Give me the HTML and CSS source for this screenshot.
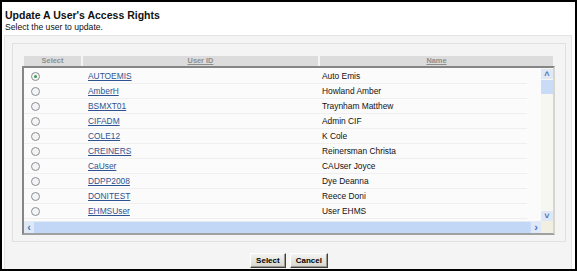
FILE: index.html
```html
<!DOCTYPE html>
<html lang="en">
<head>
  <meta charset="UTF-8">
  <title>Update A User's Access Rights</title>
  <link rel="stylesheet" href="styles.css">
</head>
<body>
<div class="page">
  <div class="head">
    <h1>Update A User's Access Rights</h1>
    <p>Select the user to update.</p>
  </div>
  <div class="panel">
    <div class="box">
      <div class="cols">
        <div class="plain">Select</div>
        <div>User ID</div>
        <div>Name</div>
      </div>
      <div class="list">
        <div class="rows">
          <div class="row"><span class="radio on"></span><a href="#">AUTOEMIS</a><span>Auto Emis</span></div>
          <div class="row"><span class="radio"></span><a href="#">AmberH</a><span>Howland Amber</span></div>
          <div class="row"><span class="radio"></span><a href="#">BSMXT01</a><span>Traynham Matthew</span></div>
          <div class="row"><span class="radio"></span><a href="#">CIFADM</a><span>Admin CIF</span></div>
          <div class="row"><span class="radio"></span><a href="#">COLE12</a><span>K Cole</span></div>
          <div class="row"><span class="radio"></span><a href="#">CREINERS</a><span>Reinersman Christa</span></div>
          <div class="row"><span class="radio"></span><a href="#">CaUser</a><span>CAUser Joyce</span></div>
          <div class="row"><span class="radio"></span><a href="#">DDPP2008</a><span>Dye Deanna</span></div>
          <div class="row"><span class="radio"></span><a href="#">DONITEST</a><span>Reece Doni</span></div>
          <div class="row"><span class="radio"></span><a href="#">EHMSUser</a><span>User EHMS</span></div>
        </div>
        <div class="vbar">
          <span class="arrow">&#x02C4;</span>
          <span class="vthumb"></span>
          <span class="track"></span>
          <span class="arrow">&#x02C5;</span>
        </div>
        <div class="hbar">
          <span class="arrow">&lsaquo;</span>
          <span class="hthumb"></span>
          <span class="arrow">&rsaquo;</span>
        </div>
        <div class="corner"></div>
      </div>
    </div>
    <div class="actions">
      <button>Select</button>
      <button>Cancel</button>
    </div>
  </div>
</div>
</body>
</html>
```

FILE: styles.css
```css
body { margin: 0; font-family: "Liberation Sans", Arial, sans-serif; background: #fff; }
.page { width: 577px; height: 271px; box-sizing: border-box; border: 2px solid #000; display: flex; flex-direction: column; }
.head { padding: 7px 0 0 3px; }
.head h1 { margin: 0; font-size: 10.5px; line-height: 13px; font-weight: bold; color: #111; }
.head p { margin: 0; font-size: 8.6px; line-height: 10px; color: #111; }
.panel { flex: 1; margin: 3px 3px 0 2px; background: #f4f4f4; border: 1px solid #e4e4e4; border-bottom: 0; padding: 7px 5px 0 7px; }
.box { border: 1px solid #e0e0e0; padding: 12px 10px 6px 9px; }
.cols { display: grid; grid-template-columns: 57px 235px 1fr; gap: 2px; margin: 0 2px; height: 10px; }
.cols div { background: #dcdcdc; color: #8e8e8e; font-size: 7.4px; font-weight: bold; line-height: 10px; text-align: center; text-decoration: underline; }
.cols .plain { text-decoration: none; }
.list { display: grid; grid-template-columns: 1fr 12px; grid-template-rows: 153px 12px; height: 169px; box-sizing: border-box; border: 2px solid #858585; border-right-color: #d8d6cc; border-bottom-color: #a0a0a0; background: #fbfbfb; }
.rows { overflow: hidden; padding-top: 1px; }
.row { display: grid; grid-template-columns: 64px 234px 1fr; align-items: center; height: 15px; border-bottom: 1px solid #efefef; box-sizing: border-box; margin-right: 14px; font-size: 8.4px; color: #111; }
.row a { color: #2f5290; text-decoration: underline; }
.radio { width: 9px; height: 9px; margin-left: 7px; box-sizing: border-box; border: 1px solid #8a8f96; border-radius: 50%; background: #f4f4f4; position: relative; }
.radio.on::after { content: ""; position: absolute; left: 2px; top: 2px; width: 3px; height: 3px; border-radius: 50%; background: #3d9a52; }
.vbar { display: flex; flex-direction: column; background: #f7f7f2; padding-top: 1px; }
.arrow { display: block; height: 10px; line-height: 10px; font-size: 9px; font-weight: bold; color: #4d6fae; text-align: center; background: #dfe8f7; }
.vthumb { height: 14px; margin: 1px 0; background: #c9dbf6; }
.track { flex: 1; }
.hbar { display: flex; background: #c6d9f6; border-top: 1px solid #e4eaf3; }
.hbar .arrow { width: 10px; height: 11px; background: #dfe8f7; font-size: 11px; }
.hthumb { flex: 1; background: #c2d6f5; margin-right: 2px; }
.corner { background: #f1eee2; }
.actions { display: flex; justify-content: center; gap: 4px; margin-top: 11px; }
.actions button { font-family: "Liberation Sans", Arial, sans-serif; font-size: 8px; font-weight: bold; height: 15px; padding: 0 5px; color: #000; background: linear-gradient(#f4f4f2, #d6d4cc); border: 1px solid; border-color: #ffffff #404040 #404040 #ffffff; box-shadow: inset -1px -1px 0 #9a9890; }
```
